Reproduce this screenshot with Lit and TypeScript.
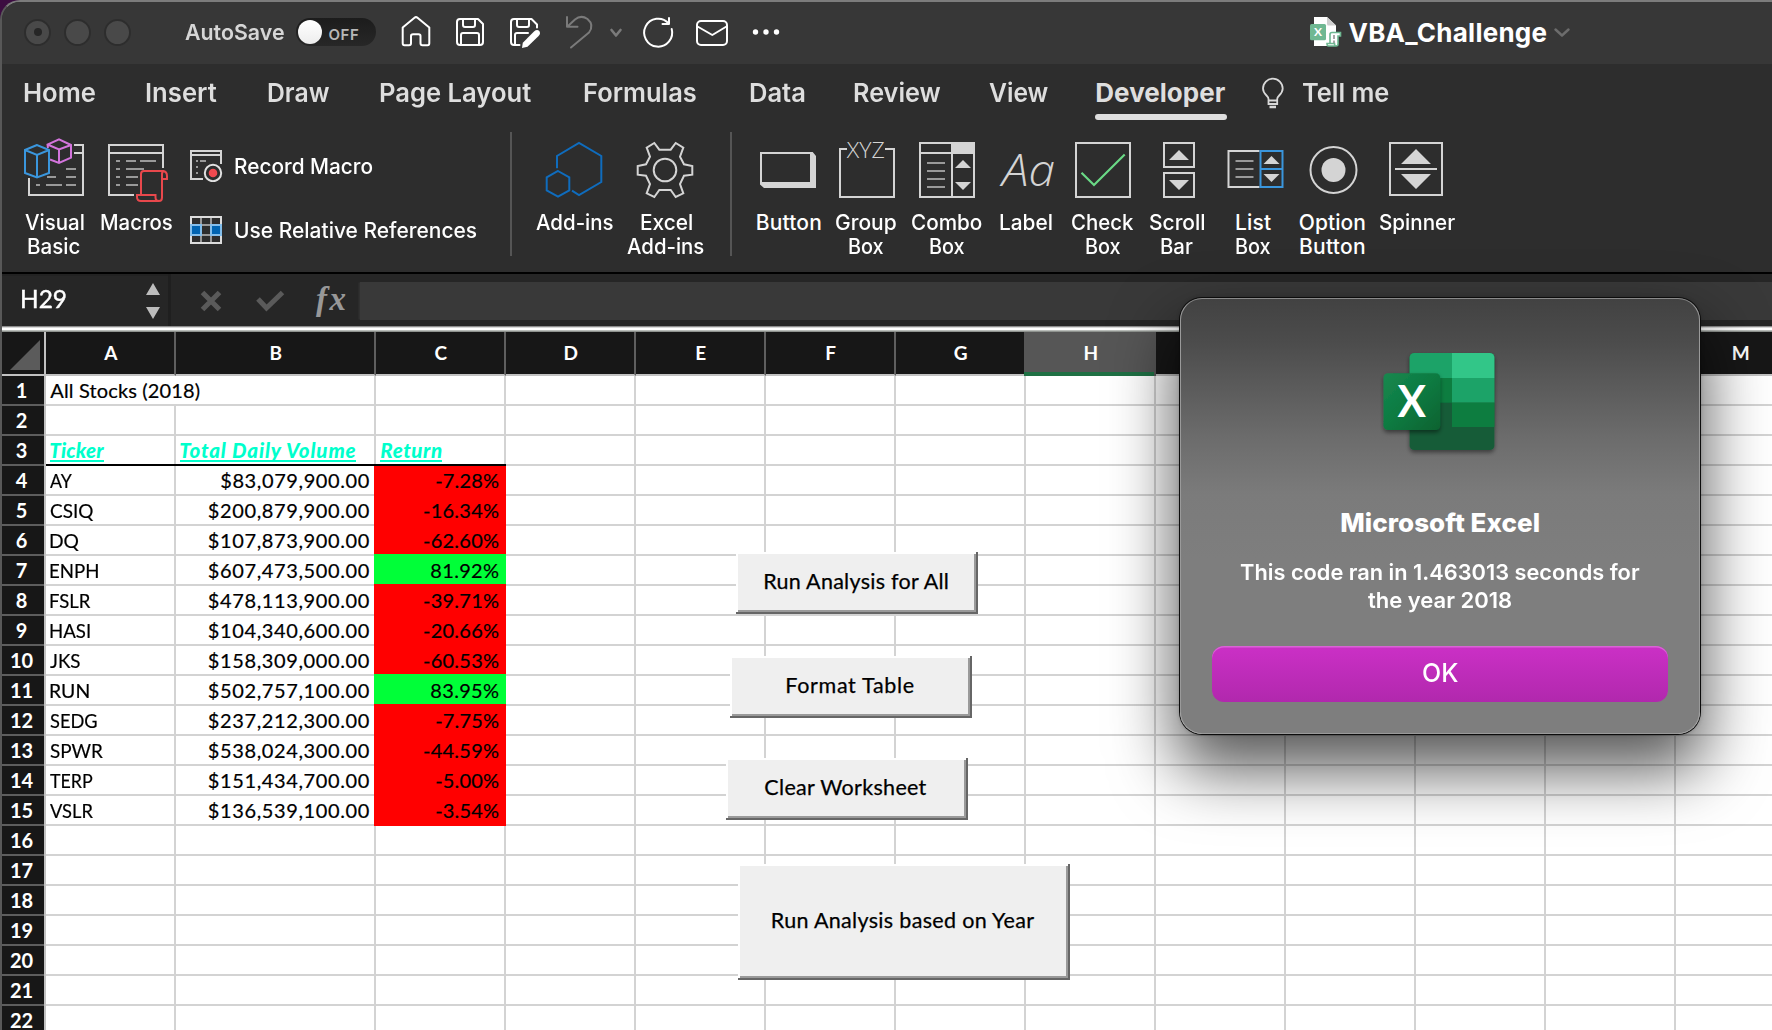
import { LitElement, html, svg, css } from "lit";
import { customElement, property } from "lit/decorators.js";

/**
 * A single line of text drawn at a set width: short text is tracked out,
 * text that is too long is condensed.
 */
@customElement("fit-text")
class FitText extends LitElement {
  @property() text = "";
  @property({ type: Number }) w = 0;

  static styles = css`
    :host { display: inline-block; white-space: pre; }
    .run { display: inline-block; transform-origin: 0 50%; }
  `;

  render() {
    return html`<span class="run">${this.text}</span>`;
  }

  updated() {
    const run = this.renderRoot.querySelector(".run") as HTMLElement;
    const cs = getComputedStyle(run);
    const ctx = document.createElement("canvas").getContext("2d")!;
    ctx.font = `${cs.fontStyle} ${cs.fontWeight} ${cs.fontSize} ${cs.fontFamily}`;
    const m = ctx.measureText(this.text);
    const left = m.actualBoundingBoxLeft;
    const ink = left + m.actualBoundingBoxRight;
    if (this.w < ink) {
      const scale = this.w / ink;
      run.style.transform = `scaleX(${scale})`;
      run.style.marginLeft = `${left * scale}px`;
      run.style.marginRight = `${this.w - m.width - left * scale}px`;
    } else {
      const spacing = (this.w - ink) / Math.max(1, this.text.length - 1);
      run.style.letterSpacing = `${spacing}px`;
      run.style.marginLeft = `${left}px`;
      run.style.marginRight = `${m.actualBoundingBoxRight - m.width - spacing}px`;
    }
  }
}

const t = (text: string, w: number) => html`<fit-text .text=${text} .w=${w}></fit-text>`;

type Line = [string, number];
interface Tool { icon: unknown; cx: number; lines: Line[]; }

const iconVisualBasic = svg`
  <g fill="none" stroke-width="2">
    <path stroke="#d4d4d4" d="M74 145H83V195H29V178M74 153H83"/>
    <path stroke="#999" d="M66 169H76M47 177H56M66 177H76M36 185H40M46 185H62M66 185H76"/>
    <path stroke="#d374dc" d="M50 159.500L59 163L71 157.700V145L59 139.300L47.500 144.500L48 148M47.500 144.500L59 149.500L71 145M59 149.500V163"/>
    <path stroke="#3a96dd" d="M37 145L25 150V173L37 177.500L49 173V150ZM25 150L37 155L49 150M37 155V177"/>
  </g>`;
const iconMacros = svg`
  <g fill="none" stroke-width="2">
    <path stroke="#d4d4d4" d="M134 195H109V145H163V168M109 153H163"/>
    <path stroke="#999" d="M116 161H120M126 161H136M140 161H156M116 169H120M126 169H144M116 177H120M126 177H138M116 185H120M126 185H138"/>
    <path stroke="#e8484c" d="M141 195V174Q141 171 144 171H163Q167 171.500 167 176V179H162V174Q162 171 164.500 171M162 178V197.500Q162 201 159 201H141Q137 201 137 197V195H155.500V197.500Q155.500 201 159 201"/>
  </g>`;
const iconRecord = svg`
  <g fill="none" stroke-width="2">
    <path stroke="#d4d4d4" d="M203 179H191V151H221V164M191 155H221"/>
    <path stroke="#999" d="M196 161H198M200 161H206M196 167H198M196 173H198"/>
    <circle cx="213" cy="173" r="8.200" stroke="#e0e0e0"/>
  </g><circle cx="213" cy="173" r="4.300" fill="#f04a50"/>`;
const iconRelative = svg`
  <path fill="none" stroke="#999" stroke-width="2" d="M201 217V243M211 217V243M191 225H221M191 235H221"/>
  <rect x="191" y="217" width="30" height="26" fill="none" stroke="#dcdcdc" stroke-width="2"/>
  <path fill="#83beec" d="M190 224H202V236H190ZM210 224H222V236H210Z"/>
  <path fill="#0063b1" d="M192 226H200V234H192ZM212 226H220V234H212Z"/>`;
const iconAddins = svg`
  <path fill="none" stroke="#0f6cbd" stroke-width="2" d="M557 168.300V156L579 143L601.300 156V182L579 195L572 190.700M558 171L569.300 177.300V190.300L558 196.700L546.700 190.300V177.300Z"/>`;
const iconGear = svg`
  <g fill="none" stroke="#d4d4d4" stroke-width="2">
    <circle cx="665" cy="170" r="11.300"/>
    <path d="M692.300 166V174.700L684 175.700L680 184L683.300 193.300L675.700 197L670.700 190H659.300L654.300 197L646.700 193.300L650 184L646 175.700L637.700 174.700V166L646 164.300L650 156.700L646.700 147.700L654.300 143L659.300 149.700H670.700L675.700 143L683.300 147.700L680 156.700L684 164.300Z"/>
  </g>`;
const iconButton = svg`
  <path fill="#d4d4d4" fill-rule="evenodd" d="M760 152H812.700L816 156V188H764L760 184.500ZM762 154V182H810V154Z"/>`;
const iconGroup = svg`
  <path fill="none" stroke="#d4d4d4" stroke-width="2" d="M847 149H840V197H894V149H885"/>
  <text x="846.800" y="158.300" class="xyz" textLength="38" lengthAdjust="spacingAndGlyphs">XYZ</text>`;
const iconCombo = svg`
  <g fill="none" stroke="#d4d4d4" stroke-width="2"><path d="M920 143H974V197H920ZM920 153H974M952 143V197"/></g>
  <path fill="#d4d4d4" d="M951 142H975V154H951ZM963 160L971 168H955ZM955 182H971L963 190Z"/>
  <path stroke="#999" stroke-width="2" d="M927 163H945M927 171H945M927 179H945M927 187H945"/>`;
const iconLabel = svg`<text x="1002" y="186" class="aa" textLength="53" lengthAdjust="spacingAndGlyphs">Aa</text>`;
const iconCheck = svg`
  <rect x="1076" y="143" width="54" height="54" fill="none" stroke="#d4d4d4" stroke-width="2"/>
  <path fill="none" stroke="#6ad986" stroke-width="2.200" d="M1081.500 172.700L1094 185L1124.700 154.500"/>`;
const iconScroll = svg`
  <path fill="none" stroke="#d4d4d4" stroke-width="2" d="M1164 143H1194V167H1164ZM1164 173H1194V197H1164Z"/>
  <path fill="#d4d4d4" d="M1179 150L1189 160H1169ZM1169 180H1189L1179 190Z"/>`;
const iconList = svg`
  <path fill="none" stroke="#d4d4d4" stroke-width="2" d="M1259 151H1228V187H1259"/>
  <path stroke="#999" stroke-width="2" d="M1235 161H1253M1235 169H1253M1235 177H1253"/>
  <path fill="none" stroke="#3a96dd" stroke-width="2" d="M1260 151H1282V187H1260ZM1260 169H1282"/>
  <path fill="#d4d4d4" d="M1271 156L1279 164H1263ZM1263 174H1279L1271 182Z"/>`;
const iconOption = svg`
  <circle cx="1333" cy="170" r="23" fill="none" stroke="#d4d4d4" stroke-width="2"/>
  <circle cx="1333" cy="170" r="12" fill="#d4d4d4"/>`;
const iconSpinner = svg`
  <path fill="none" stroke="#d4d4d4" stroke-width="2" d="M1390 143H1442V195H1390ZM1395 169H1437"/>
  <path fill="#d4d4d4" d="M1416 149L1431 164H1401ZM1401 174H1431L1416 189Z"/>`;

const codeTools: Tool[] = [
  { icon: iconVisualBasic, cx: 54, lines: [["Visual", 58.6], ["Basic", 52.3]] },
  { icon: iconMacros, cx: 137, lines: [["Macros", 71.4]] },
];
const addinTools: Tool[] = [
  { icon: iconAddins, cx: 575, lines: [["Add-ins", 77.3]] },
  { icon: iconGear, cx: 666, lines: [["Excel", 51], ["Add-ins", 77]] },
];
const controlTools: Tool[] = [
  { icon: iconButton, cx: 789, lines: [["Button", 64.3]] },
  { icon: iconGroup, cx: 866, lines: [["Group", 59.7], ["Box", 35]] },
  { icon: iconCombo, cx: 947, lines: [["Combo", 69.7], ["Box", 35]] },
  { icon: iconLabel, cx: 1026, lines: [["Label", 51.7]] },
  { icon: iconCheck, cx: 1103, lines: [["Check", 61.7], ["Box", 35]] },
  { icon: iconScroll, cx: 1177, lines: [["Scroll", 54.3], ["Bar", 31.7]] },
  { icon: iconList, cx: 1253.5, lines: [["List", 35], ["Box", 35]] },
  { icon: iconOption, cx: 1332.5, lines: [["Option", 65.3], ["Button", 65]] },
  { icon: iconSpinner, cx: 1417, lines: [["Spinner", 75]] },
];

const tabs: Line[] = [
  ["Home", 71.6], ["Insert", 70.6], ["Draw", 61.6], ["Page Layout", 151], ["Formulas", 112.6],
  ["Data", 55], ["Review", 87], ["View", 59.5], ["Developer", 129.5],
];

/* ticker, ticker width, volume, volume width, return, return width */
const stocks: [string, number, string, number, string, number][] = [
  ["AY", 22.3, "$83,079,900.00", 148.6, "-7.28%", 62.7],
  ["CSIQ", 43.3, "$200,879,900.00", 161, "-16.34%", 75],
  ["DQ", 29, "$107,873,900.00", 161, "-62.60%", 75],
  ["ENPH", 48.3, "$607,473,500.00", 161, "81.92%", 68.7],
  ["FSLR", 40.8, "$478,113,900.00", 161, "-39.71%", 75],
  ["HASI", 39.7, "$104,340,600.00", 161, "-20.66%", 75],
  ["JKS", 29.7, "$158,309,000.00", 161, "-60.53%", 75],
  ["RUN", 39, "$502,757,100.00", 161, "83.95%", 68.7],
  ["SEDG", 47, "$237,212,300.00", 161, "-7.75%", 62.7],
  ["SPWR", 53.3, "$538,024,300.00", 161, "-44.59%", 75],
  ["TERP", 42.7, "$151,434,700.00", 161, "-5.00%", 62.7],
  ["VSLR", 43.3, "$136,539,100.00", 161, "-3.54%", 62.7],
];
const columns = "ABCDEFGHIJKLM".split("");
const rows = Array.from({ length: 22 }, (_, i) => i + 1);
const gain = (r: number) => !!stocks[r - 4] && !stocks[r - 4][4].startsWith("-");

@customElement("app-root")
class AppRoot extends LitElement {
  static styles = css`
    :host { display: block; width: 1772px; height: 1030px; overflow: hidden; background: #3c0d41; font-family: Inter, sans-serif; }
    * { box-sizing: border-box; }
    svg { display: block; flex: none; }
    .window { position: relative; height: 1030px; border-top: 2px solid #7c7c7c; border-left: 2px solid #585858; border-top-left-radius: 20px; overflow: hidden; background: #2d2d2d; }

    .titlebar { height: 62px; padding: 0 0 2px 22px; display: flex; align-items: center; background: #373737; }
    .lights { display: flex; gap: 13px; width: 160.500px; }
    .light { width: 27px; height: 27px; border-radius: 50%; background: #494949; border: 2px solid #2d2d2d; display: grid; place-items: center; }
    .dot { width: 8px; height: 8px; border-radius: 50%; background: #262626; }
    .autosave { font-size: 22px; font-weight: 600; color: #d6d6d6; width: 111.500px; line-height: 28px; }
    .toggle { width: 80px; height: 28px; border-radius: 14px; background: linear-gradient(#1c1c1c, #272727); display: flex; align-items: center; padding-left: 2px; margin-right: 24px; }
    .knob { width: 24px; height: 24px; border-radius: 50%; background: linear-gradient(#fff, #ededed); margin-right: 6.500px; }
    .off { font-size: 15px; font-weight: 600; color: #b8b8b8; padding-top: 5px; line-height: 18px; }
    .file { display: flex; align-items: center; margin-left: 528px; }
    .filename { font-size: 26px; font-weight: 700; color: #fff; line-height: 30px; margin: 0 7px 0 6.500px; padding-top: 1.500px; }

    .tabs { height: 56px; display: grid; grid-template-columns: 122px 122px 112.300px 204px 165.700px 104.300px 135px 107.500px 164.700px 41.500px auto; padding-left: 21.500px; font-size: 26px; font-weight: 600; color: #dedede; line-height: 58px; }
    .tab.active { font-weight: 700; width: 132px; margin-left: -1px; padding-left: 1px; display: flex; flex-direction: column; height: 56px; }
    .tab.active fit-text { height: 50px; }
    .bar { height: 6px; border-radius: 3px; background: #dedede; margin-left: -1px; }
    .ribbon { height: 152px; display: flex; padding: 12px 0 0 18px; color: #fff; font-size: 21px; font-weight: 500; line-height: 24px; }
    .group { display: grid; }
    .code { grid-template-columns: 68px 98px; }
    .addins { grid-template-columns: 86px 96px; padding-left: 20px; width: 218px; }
    .controls { grid-template-columns: 78px 76px 86px 72px 82px 66px 87px 71px 98px; padding-left: 18px; }
    .tool { display: flex; flex-direction: column; align-items: center; }
    .tool svg { margin-bottom: 4.500px; }
    .commands { display: flex; flex-direction: column; gap: 32px; padding-top: 18px; width: 324px; }
    .command { display: flex; align-items: center; height: 32px; gap: 11.300px; padding-left: 2px; }
    .command fit-text { padding-top: 1.500px; }
    .rule { width: 2px; height: 124px; background: #555; }
    .xyz { font: 300 22px "Open Sans", sans-serif; fill: #d4d4d4; }
    .aa { font: italic 300 45px "Open Sans", sans-serif; fill: #d4d4d4; }

    .formula { height: 54px; border-top: 2px solid #000; background: #262626; display: flex; align-items: flex-start; }
    .namebox { width: 166px; height: 52px; display: flex; align-items: center; padding: 0 0 4.500px 19.800px; font: 400 24.500px Lato, sans-serif; color: #fff; border-top: 2px solid #222; -webkit-text-stroke: 0.400px #fff; }
    .namebox svg { margin-left: 78.300px; margin-top: 4.500px; }
    .gutter { width: 3px; height: 52px; background: #1f1f1f; }
    .fx { font: italic 700 33px "Liberation Serif", serif; color: #989898; width: 45px; line-height: 36px; padding: 7px 0 0 1px; }
    .entry { flex: 1; height: 38px; margin-top: 8px; background: #393939; box-shadow: -2px 0 0 -0.500px #303030; }
    .edge { height: 6px; background: linear-gradient(#8c8c8c 0 1px, #d8d8d8 1px 2px, #fff 2px 4px, #b9bdb9 4px 5px, #8e928e 5px 6px); }

    .sheet { position: relative; width: 1774px; height: 698px; background: #fff; overflow: hidden; font-family: Lato, sans-serif; }
    .line { display: grid; grid-template-columns: 44px 130px 200px repeat(11, 130px); height: 30px; }
    .line.top { height: 44px; font-size: 19px; font-weight: 700; line-height: 42px; color: #fff; }
    .head { background: #171717; border-right: 2px solid #5f5f5f; border-bottom: 2px solid #c2c2c2; text-align: center; padding-left: 1.500px; }
    .head.sel { background: #565656; margin-left: -2px; padding-left: 3.500px; border-right-color: #565656; border-bottom: none; box-shadow: inset 0 -4px #1f7044; position: relative; }
    .corner { background: #171717; border-right: 2px solid #c2c2c2; border-bottom: 2px solid #c2c2c2; }
    .rownum { background: #171717; color: #fff; font-size: 20px; font-weight: 700; line-height: 29px; text-align: center; padding-right: 3px; border-right: 2px solid #c2c2c2; box-shadow: inset 0 -2px #5d5d5d; }
    .cell { font-size: 20px; color: #000; line-height: 29px; box-shadow: inset -2px 0 #d3d3d3, inset 0 -2px #d3d3d3; padding-left: 4.300px; white-space: nowrap; -webkit-text-stroke: 0.200px #000; }
    .cell.open { box-shadow: inset 0 -2px #d3d3d3; }
    .cell.num { text-align: right; padding: 0 7.200px 0 0; }
    .cell.title { font-size: 20.500px; font-weight: 900; font-style: italic; color: #00ffcc; -webkit-text-stroke: 0; box-shadow: inset 0 -2px #000, inset -2px 0 #d3d3d3; }
    .cell.title fit-text { height: 26px; line-height: 29px; border-bottom: 2px solid #00ffcc; }
    .cell.ret { margin-left: -2px; padding-right: 7px; }
    .cell.down { background: #ff0000; box-shadow: inset 0 -2px #ff0000; }
    .cell.up { background: #00ff38; box-shadow: inset 0 -2px #00ff38; }
    .cell.nextup { box-shadow: inset 0 -2px #00ff38; }
    .cell.nextdown { box-shadow: inset 0 -2px #ff0000; }

    /* form buttons float freely on the worksheet */
    .push { position: absolute; width: 242px; height: 62px; background: #efefef; font: 400 21.500px Lato, sans-serif; color: #000; -webkit-text-stroke: 0.250px #000; }
    .face { width: 100%; height: 100%; padding: 0 2px 4px 0; display: grid; place-items: center; box-shadow: inset -2px 0 #666, inset 0 -2px #666, inset 2px 2px #fff, inset -4px -4px #9a9a9a; }
    .all { left: 734px; top: 220px; }
    .format { left: 728px; top: 324px; }
    .clear { left: 724px; top: 426px; }
    .year { left: 736px; top: 532px; width: 332px; height: 116px; }

    .dialog { position: absolute; left: 1178px; top: 295.500px; width: 520px; height: 436.500px; border-radius: 22px; border: 1.500px solid #9a9a9a; border-top-color: #8a8a8a; background: linear-gradient(#424242, #4c4c4c 10%, #6c6c6c 32%, #7b7b7b 45%, #7e7e7e 60%); box-shadow: 0 0 0 1px #0c0c0c, 0 0 4px rgba(0,0,0,.3), 0 32px 64px 4px rgba(0,0,0,.66); display: flex; flex-direction: column; align-items: center; padding-top: 46.500px; color: #fff; }
    .heading { font-size: 26px; font-weight: 800; line-height: 30px; margin-top: 48px; }
    .message { font-size: 22px; font-weight: 600; line-height: 28px; margin-top: 20px; display: flex; flex-direction: column; align-items: center; }
    .ok { width: 456px; height: 56px; margin-top: 32px; border-radius: 12px; background: linear-gradient(#cb30c6, #b128ad); box-shadow: inset 0 1.500px #d964d5; display: grid; place-items: center; padding: 0 0 3px 1px; font-size: 26px; font-weight: 500; line-height: 30px; }
    .letter { font: 700 43px Lato, sans-serif; fill: #fff; }
    .tiny { font: 700 12px Lato, sans-serif; fill: #fff; }
  `;

  private tool({ icon, cx, lines }: Tool) {
    return html`<div class="tool">
      <svg width="64" height="74" viewBox="${cx - 32} 132 64 74">${icon}</svg>
      ${lines.map(([s, w]) => t(s, w))}
    </div>`;
  }

  private titlebar() {
    return html`<div class="titlebar">
      <div class="lights">
        <div class="light"><div class="dot"></div></div>
        <div class="light"></div>
        <div class="light"></div>
      </div>
      <div class="autosave">${t("AutoSave", 99.5)}</div>
      <div class="toggle"><div class="knob"></div><div class="off">${t("OFF", 30.5)}</div></div>
      <svg width="382" height="40" viewBox="400 12 382 40" fill="none" stroke="#fff" stroke-width="2" stroke-linejoin="round" stroke-linecap="round">
        <path d="M404.500 45.200H409Q411 45.200 411 43.200V36Q411 34.200 413 34.200H418.500Q420.500 34.200 420.500 36V43.200Q420.500 45.200 422.500 45.200H427.500Q429.300 45.200 429.300 43.200V27.500L417.500 17.700Q416 16.500 414.500 17.700L402.700 27.500V43.200Q402.700 45.200 404.500 45.200Z"/>
        <path d="M460 19H478L483 24V42Q483 45 480 45H460Q457 45 457 42V22Q457 19 460 19ZM463 19V25Q463 27 465 27H473Q475 27 475 25V19M461 45V35Q461 33 463 33H477Q479 33 479 35V45"/>
        <path d="M519.500 45H514Q511 45 511 42V22Q511 19 514 19H531.500L537 24.500V27.500M517 19V25Q517 27 519 27H527Q529 27 529 25V19M515 45V35Q515 33 517 33H528"/>
        <path fill="#fff" stroke="none" d="M522 48L522.800 42.800L534 31.500Q537 29 539.300 31Q541 33.500 538.600 36L527.500 46.700Z"/>
        <g stroke="#7a7a7a"><path d="M567 17V26.700H577.500M567.500 26.500L575 19.500Q581 14.500 587.500 19Q594.500 25 589 32.500L571 47.500"/><path stroke-width="2.600" d="M611.500 30L616 35.500L620.500 30"/></g>
        <path d="M669 18V24H662.500M668.500 23.200A14 14 0 1 0 671.700 29"/>
        <rect x="697" y="21" width="30" height="24" rx="4"/><path d="M697.500 26.500L712.300 35L726.500 26.500"/>
        <g fill="#fff" stroke="none"><circle cx="755.500" cy="32" r="2.700"/><circle cx="766" cy="32" r="2.700"/><circle cx="776.500" cy="32" r="2.700"/></g>
      </svg>
      <div class="file">
        <svg width="32" height="34" viewBox="1310 15 32 34">
          <path fill="#fff" d="M1314 17H1327L1336 25.500V46H1314Z"/>
          <path fill="#cfcfcf" d="M1327 17L1336 25.500H1328.500Q1327 25.500 1327 24Z"/>
          <rect x="1310" y="24" width="16" height="16.300" rx="1.500" fill="#6fb892"/>
          <text class="tiny" x="1314" y="36.400">X</text>
          <path fill="#fff" stroke="#6fb892" stroke-width="1.600" d="M1330 43.500V34.500Q1330 32.500 1332 32.500H1340.500V36H1338V44Q1338 46 1336 46H1328.500Q1327 46 1327 43.500H1334.500Q1334.500 46 1336 46"/>
          <path stroke="#8a8a8a" stroke-width="1.500" stroke-dasharray="4 1.500" d="M1334 35V43"/>
        </svg>
        <div class="filename">${t("VBA_Challenge", 198)}</div>
        <svg width="16" height="12" viewBox="1554 26 16 12" fill="none" stroke="#6c6c6c" stroke-width="2.400" stroke-linecap="round" stroke-linejoin="round"><path d="M1555.500 29.500L1562 35.500L1568.500 29.500"/></svg>
      </div>
    </div>`;
  }

  private ribbon() {
    return html`
      <div class="tabs">
        ${tabs.map(([s, w]) => s === "Developer"
          ? html`<div class="tab active">${t(s, w)}<div class="bar"></div></div>`
          : html`<div class="tab">${t(s, w)}</div>`)}
        <svg width="24" height="56" viewBox="1261.500 64 24 56" fill="none" stroke="#d8d8d8" stroke-width="1.800">
          <path d="M1269 104V99Q1269 97.500 1267 95.500Q1263.500 92 1263.500 88.500A9.800 9.800 0 0 1 1283.200 88.500Q1283.200 92 1279.700 95.500Q1277.700 97.500 1277.700 99V104ZM1269 100.500H1277.700"/>
          <path stroke-width="2.400" d="M1270 107H1276.500"/>
        </svg>
        <div class="tab">${t("Tell me", 86)}</div>
      </div>
      <div class="ribbon">
        <div class="group code">${codeTools.map((x) => this.tool(x))}</div>
        <div class="commands">
          <div class="command"><svg width="36" height="32" viewBox="188 150 36 32">${iconRecord}</svg>${t("Record Macro", 137.4)}</div>
          <div class="command"><svg width="36" height="32" viewBox="188 214 36 32">${iconRelative}</svg>${t("Use Relative References", 241.8)}</div>
        </div>
        <div class="rule"></div>
        <div class="group addins">${addinTools.map((x) => this.tool(x))}</div>
        <div class="rule"></div>
        <div class="group controls">${controlTools.map((x) => this.tool(x))}</div>
      </div>`;
  }

  private formulaBar() {
    return html`<div class="formula">
        <div class="namebox">${t("H29", 43.8)}
          <svg width="20" height="40" viewBox="144 281 20 40" fill="#bdbdbd"><path d="M153 283L160 295H146ZM146 307H160L153 319Z"/></svg>
        </div>
        <div class="gutter"></div>
        <svg width="144" height="52" viewBox="171 274 144 52" fill="none" stroke="#5a5a5a" stroke-width="5">
          <path d="M202.500 292.500L219.500 309.500M219.500 292.500L202.500 309.500M258 299L266.500 308L282.500 292.500"/>
        </svg>
        <div class="fx">${t("fx", 29.5)}</div>
        <div class="entry"></div>
      </div>
      <div class="edge"></div>`;
  }

  private cell(c: string, r: number) {
    if (r === 1 && c === "A") return html`<div class="cell open">${t("All Stocks (2018)", 149.5)}</div>`;
    if (r === 3) {
      if (c === "A") return html`<div class="cell title">${t("Ticker", 54)}</div>`;
      if (c === "B") return html`<div class="cell title">${t("Total Daily Volume", 176.5)}</div>`;
      if (c === "C") return html`<div class="cell title">${t("Return", 61.7)}</div>`;
    }
    const s = stocks[r - 4];
    if (s) {
      if (c === "A") return html`<div class="cell">${t(s[0], s[1])}</div>`;
      if (c === "B") return html`<div class="cell num">${t(s[2], s[3])}</div>`;
      if (c === "C") {
        const next = r < 15 ? (gain(r + 1) ? "nextup" : "nextdown") : "";
        return html`<div class="cell num ret ${gain(r) ? "up" : "down"} ${next}">${t(s[4], s[5])}</div>`;
      }
    }
    return html`<div class="cell"></div>`;
  }

  private sheet() {
    return html`<div class="sheet">
      <div class="line top">
        <div class="corner"><svg width="42" height="42" viewBox="2 332 42 42"><path fill="#5b5b5b" d="M40 340V370H10Z"/></svg></div>
        ${columns.map((c) => html`<div class="head ${c === "H" ? "sel" : ""}">${c}</div>`)}
      </div>
      ${rows.map((r) => html`<div class="line"><div class="rownum">${r}</div>${columns.map((c) => this.cell(c, r))}</div>`)}
      <div class="push all"><div class="face">${t("Run Analysis for All", 185.5)}</div></div>
      <div class="push format"><div class="face">${t("Format Table", 128)}</div></div>
      <div class="push clear"><div class="face">${t("Clear Worksheet", 162)}</div></div>
      <div class="push year"><div class="face">${t("Run Analysis based on Year", 264)}</div></div>
    </div>`;
  }

  private dialog() {
    return html`<div class="dialog">
      <svg width="120" height="115" viewBox="1380 345 120 115">
        <defs>
          <linearGradient id="g" x1="0" y1="0" x2="1" y2="1"><stop offset="0" stop-color="#18884f"/><stop offset=".5" stop-color="#0b7a41"/><stop offset="1" stop-color="#0a6230"/></linearGradient>
          <filter id="s" x="-20%" y="-20%" width="140%" height="150%"><feDropShadow dx="0" dy="2.500" stdDeviation="2" flood-opacity=".45"/></filter>
          <clipPath id="c"><rect x="1409.600" y="353" width="84.800" height="97" rx="4.500"/></clipPath>
        </defs>
        <g filter="url(#s)"><g clip-path="url(#c)">
          <rect x="1409" y="353" width="86" height="97" fill="#185c37"/>
          <rect x="1409" y="353" width="43" height="25" fill="#1fa367"/>
          <rect x="1452" y="353" width="43" height="25" fill="#30c688"/>
          <rect x="1409" y="378" width="43" height="24.700" fill="#087d40"/>
          <rect x="1452" y="378" width="43" height="24.700" fill="#1fa367"/>
          <rect x="1452" y="402.700" width="43" height="24.300" fill="#087d40"/>
        </g></g>
        <rect x="1383.500" y="373.300" width="56.700" height="56.700" rx="4.500" fill="url(#g)" filter="url(#s)"/>
        <text class="letter" x="1397.500" y="417" textLength="28.500" lengthAdjust="spacingAndGlyphs">X</text>
      </svg>
      <div class="heading">${t("Microsoft Excel", 197.5)}</div>
      <div class="message">${t("This code ran in 1.463013 seconds for", 399.8)}${t("the year 2018", 143)}</div>
      <div class="ok">${t("OK", 35.5)}</div>
    </div>`;
  }

  render() {
    return html`<div class="window">
      ${this.titlebar()}${this.ribbon()}${this.formulaBar()}${this.sheet()}${this.dialog()}
    </div>`;
  }
}
